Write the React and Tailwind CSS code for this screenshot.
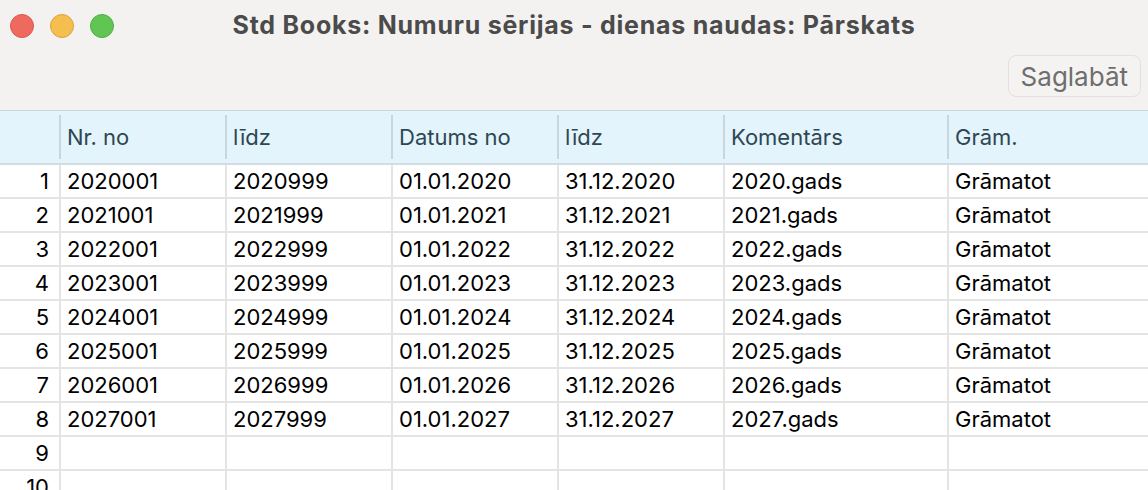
import React from "react";

const cols = [
  { label: "Nr. no", w: "w-[166px]" },
  { label: "līdz", w: "w-[166px]" },
  { label: "Datums no", w: "w-[166px]" },
  { label: "līdz", w: "w-[166px]" },
  { label: "Komentārs", w: "w-[224px]" },
  { label: "Grām.", w: "flex-1" },
];

const years = [2020, 2021, 2022, 2023, 2024, 2025, 2026, 2027];

const rows = years.map((y) => [
  `${y}001`,
  `${y}999`,
  `01.01.${y}`,
  `31.12.${y}`,
  `${y}.gads`,
  "Grāmatot",
]);
while (rows.length < 10) rows.push(["", "", "", "", "", ""]);

export default function App() {
  return (
    <div className="w-[1148px] h-[490px] overflow-hidden bg-white font-['Inter','Liberation_Sans',sans-serif]">
      {/* title bar + toolbar */}
      <div className="h-[110px] bg-[#f3f2f1] flex flex-col">
        <div className="relative h-[52px] flex items-center justify-center">
          <div className="absolute left-[10px] top-[14px] flex gap-[16px]">
            <span className="w-[24px] h-[24px] rounded-full bg-[#ee6a5f] border border-[#d8584e]" />
            <span className="w-[24px] h-[24px] rounded-full bg-[#f5bf4f] border border-[#d9a33c]" />
            <span className="w-[24px] h-[24px] rounded-full bg-[#61c554] border border-[#4fae44]" />
          </div>
          <div className="text-[25px] font-bold text-[#4b4b4b] tracking-[0.75px]">
            Std Books: Numuru sērijas - dienas naudas: Pārskats
          </div>
        </div>
        <div className="flex justify-end pr-[7px] pt-[3px]">
          <button className="h-[42px] px-[12px] rounded-[8px] border border-[#e2e1e0] bg-[#f4f3f2] text-[26px] text-[#6e6e6e]">
            Saglabāt
          </button>
        </div>
      </div>

      {/* header */}
      <div className="h-[55px] bg-[#e3f4fc] border-t border-[#c9d6dc] border-b-2 border-b-[#d2dde2] flex items-center">
        <div className="w-[59px] shrink-0" />
        {cols.map((c, i) => (
          <div key={i} className={`${c.w} shrink-0 h-[44px] flex items-center border-l-2 border-[#c8d6dd] pl-[6px] text-[22px] text-[#2e4753]`}>
            {c.label}
          </div>
        ))}
      </div>

      {/* body */}
      <div className="flex flex-col">
        {rows.map((r, i) => (
          <div key={i} className="h-[34px] flex border-b-2 border-[#e4e4e4] text-[22px] text-black">
            <div className="w-[59px] shrink-0 flex items-center justify-end pr-[10px]">{i + 1}</div>
            {r.map((v, j) => (
              <div key={j} className={`${cols[j].w} shrink-0 flex items-center border-l-2 border-[#e4e4e4] pl-[6px]`}>
                {v}
              </div>
            ))}
          </div>
        ))}
      </div>
    </div>
  );
}
